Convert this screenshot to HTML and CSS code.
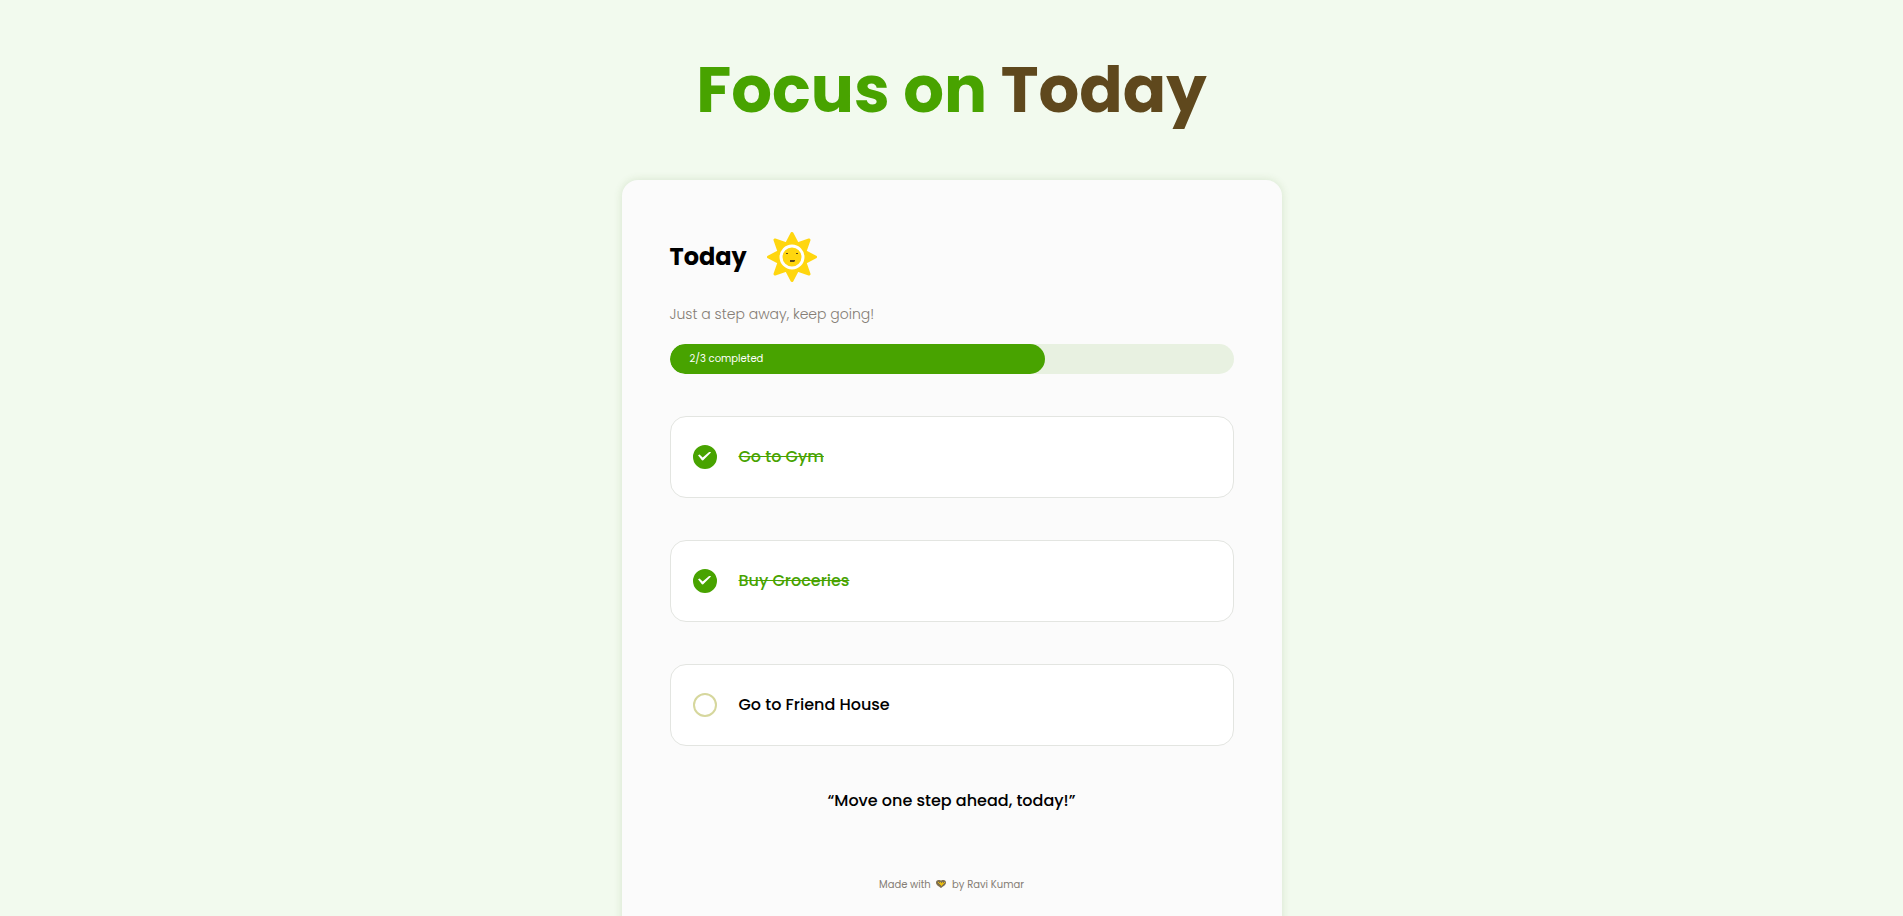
FILE: index.html
```html
<!DOCTYPE html>
<html lang="en">
<head>
    <meta charset="UTF-8">
    <meta name="viewport" content="width=device-width, initial-scale=1.0">
    <title>Focus on Today</title>
    <link rel="stylesheet" href="styles.css">
</head>
<body>
    <h1 class="main-heading">Focus on <span>Today</span></h1>

    <main class="app-container">
        <div class="today-row">
            <h2>Today</h2>
            <svg class="sun" viewBox="0 0 50 50" aria-hidden="true">
                <path d="M25 1.5L30.500 12L42 8L38 19.500L48.500 25L38 30.500L42 42L30.500 38L25 48.500L19.500 38L8 42L12 30.500L1.500 25L12 19.500L8 8L19.500 12Z" fill="#ffd60f" stroke="#ffd60f" stroke-width="3" stroke-linejoin="round"/>
                <circle cx="25" cy="25" r="11" fill="#ffd60f" stroke="#fff" stroke-width="3"/>
                <path d="M19 21.500h2M29 21.500h2" stroke="#5d4a1a" stroke-width="1"/>
                <path d="M23 28h5v1l-1 1h-4z" fill="#5d4a1a"/>
            </svg>
        </div>

        <p class="progress-label">Just a step away, keep going!</p>
        <div class="progress-bar">
            <div class="progress-value" style="width: 66.66%"><span>2/3 completed</span></div>
        </div>

        <div class="goal-container">
            <input type="checkbox" id="first" checked>
            <label for="first">Go to Gym</label>
        </div>
        <div class="goal-container">
            <input type="checkbox" id="second" checked>
            <label for="second">Buy Groceries</label>
        </div>
        <div class="goal-container">
            <input type="checkbox" id="third">
            <label for="third">Go to Friend House</label>
        </div>

        <p class="quote">“Move one step ahead, today!”</p>

        <footer class="footer">
            Made with
            <svg class="heart" viewBox="0 0 10 8" aria-hidden="true">
                <path d="M2.500 0C4 0 5 .5 5 .5S6 0 7.500 0 10 1 10 2.500C10 5 7 6.500 5 8 3 6.500 0 5 0 2.500 0 1 1 0 2.500 0z" fill="#80704f"/>
                <path d="M2 2h1v1h1V2h1v1h1V2h1v1h1V2h1v1H8v1H7v1H6v1H5V5H4V4H3V3H2z" fill="#e8bc10"/>
            </svg>
            by Ravi Kumar
        </footer>
    </main>

    <script>
        const checkBoxes = document.querySelectorAll('.goal-container input');
        const progressValue = document.querySelector('.progress-value');

        checkBoxes.forEach((checkbox) => {
            checkbox.addEventListener('change', () => {
                const done = document.querySelectorAll('.goal-container input:checked').length;
                progressValue.style.width = `${(done / checkBoxes.length) * 100}%`;
                progressValue.firstElementChild.innerText = `${done}/${checkBoxes.length} completed`;
            });
        });
    </script>
</body>
</html>
```
FILE: styles.css
```css
* {
    box-sizing: border-box;
    margin: 0;
    padding: 0;
}

body {
    font-family: Poppins, Inter, sans-serif;
    background-color: #f2faee;
    color: #000;
    padding: 42px 16px;
}

.main-heading {
    font-size: 64px;
    line-height: 96px;
    text-align: center;
    color: #48a300;
    margin-bottom: 42px;
}

.main-heading span {
    color: #5f481d;
}

.app-container {
    max-width: 660px;
    margin: 0 auto;
    padding: 48px;
    background-color: #fbfbfb;
    border-radius: 16px;
    box-shadow: 0 0 8px rgba(72, 120, 40, 0.16);
}

.today-row {
    display: flex;
    align-items: center;
    gap: 20px;
    height: 58px;
}

.today-row h2 {
    font-size: 24px;
    line-height: 36px;
}

.sun {
    width: 50px;
    height: 50px;
}

.progress-label {
    font-size: 14px;
    font-weight: 300;
    line-height: 24px;
    color: #857d75;
    margin: 16px 0 18px;
}

.progress-bar {
    height: 30px;
    background-color: #e8f1e1;
    border-radius: 15px;
    overflow: hidden;
    margin-bottom: 42px;
}

.progress-value {
    height: 30px;
    background-color: #48a300;
    border-radius: 15px;
    color: #fff;
    font-size: 10px;
    line-height: 30px;
    padding-left: 20px;
    white-space: nowrap;
}

.goal-container {
    display: flex;
    align-items: center;
    gap: 22px;
    min-height: 82px;
    padding: 0 22px;
    background-color: #fff;
    border: 1px solid #e3e5e1;
    border-radius: 16px;
    margin-bottom: 42px;
}

.goal-container input {
    appearance: none;
    display: grid;
    place-items: center;
    width: 24px;
    height: 24px;
    border: 2px solid #d6d79d;
    border-radius: 50%;
    cursor: pointer;
}

.goal-container input:checked {
    background-color: #48a300;
    border-color: #48a300;
}

/* tick mark */
.goal-container input:checked::before {
    content: "";
    width: 13px;
    height: 9px;
    margin-bottom: 2px;
    background-color: #fff;
    clip-path: polygon(0 43%, 12% 33%, 36% 66%, 90% 0, 100% 12%, 38% 100%, 30% 97%);
}

.goal-container label {
    font-size: 16px;
    font-weight: 500;
    line-height: 24px;
    cursor: pointer;
}

.goal-container input:checked + label {
    color: #48a300;
    text-decoration: line-through;
}

.quote {
    font-size: 16px;
    font-weight: 500;
    line-height: 26px;
    text-align: center;
    margin-bottom: 62px;
}

.footer {
    font-size: 10px;
    line-height: 18px;
    text-align: center;
    color: #857d75;
}

.heart {
    width: 10px;
    height: 8px;
    margin: 0 3px;
}
```
